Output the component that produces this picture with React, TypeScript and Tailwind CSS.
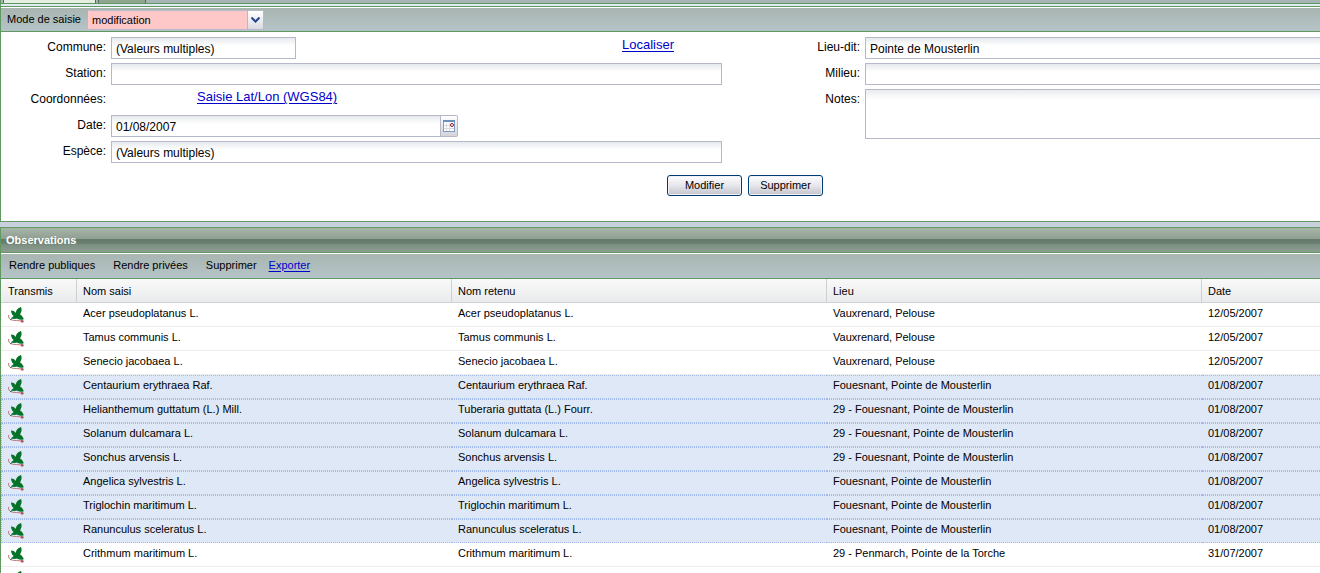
import { useState } from 'react';
import type { ReactNode } from 'react';

type Observation = { id: number; saisi: string; retenu: string; lieu: string; date: string };

const observations: Observation[] = [
  { id: 1, saisi: 'Acer pseudoplatanus L.', retenu: 'Acer pseudoplatanus L.', lieu: 'Vauxrenard, Pelouse', date: '12/05/2007' },
  { id: 2, saisi: 'Tamus communis L.', retenu: 'Tamus communis L.', lieu: 'Vauxrenard, Pelouse', date: '12/05/2007' },
  { id: 3, saisi: 'Senecio jacobaea L.', retenu: 'Senecio jacobaea L.', lieu: 'Vauxrenard, Pelouse', date: '12/05/2007' },
  { id: 4, saisi: 'Centaurium erythraea Raf.', retenu: 'Centaurium erythraea Raf.', lieu: 'Fouesnant, Pointe de Mousterlin', date: '01/08/2007' },
  { id: 5, saisi: 'Helianthemum guttatum (L.) Mill.', retenu: 'Tuberaria guttata (L.) Fourr.', lieu: '29 - Fouesnant, Pointe de Mousterlin', date: '01/08/2007' },
  { id: 6, saisi: 'Solanum dulcamara L.', retenu: 'Solanum dulcamara L.', lieu: '29 - Fouesnant, Pointe de Mousterlin', date: '01/08/2007' },
  { id: 7, saisi: 'Sonchus arvensis L.', retenu: 'Sonchus arvensis L.', lieu: '29 - Fouesnant, Pointe de Mousterlin', date: '01/08/2007' },
  { id: 8, saisi: 'Angelica sylvestris L.', retenu: 'Angelica sylvestris L.', lieu: 'Fouesnant, Pointe de Mousterlin', date: '01/08/2007' },
  { id: 9, saisi: 'Triglochin maritimum L.', retenu: 'Triglochin maritimum L.', lieu: 'Fouesnant, Pointe de Mousterlin', date: '01/08/2007' },
  { id: 10, saisi: 'Ranunculus sceleratus L.', retenu: 'Ranunculus sceleratus L.', lieu: 'Fouesnant, Pointe de Mousterlin', date: '01/08/2007' },
  { id: 11, saisi: 'Crithmum maritimum L.', retenu: 'Crithmum maritimum L.', lieu: '29 - Penmarch, Pointe de la Torche', date: '31/07/2007' },
  { id: 12, saisi: '', retenu: '', lieu: '', date: '' },
];

const inputClass =
  'block h-[22px] w-full border border-[#b5b8c8] bg-white bg-linear-to-b from-[#e6eaed] to-white to-40% px-1 pt-0.5 text-xs text-black focus:outline-none';
const toolbarClass = 'flex items-center border-t border-b border-t-white border-b-[#5f9960] bg-linear-to-b from-[#a8b5b0] to-[#b5c4c8]';
const linkClass = 'text-[13px] leading-[15px] text-[#0000cc] underline underline-offset-2';

function LeafIcon() {
  return (
    <svg className="block" width="16" height="16" viewBox="0 0 16 16" role="img" aria-label="Transmis">
      <path d="M0.5 8C0.2 10.6 1.4 12.4 4 13C7 13.8 10 13.4 14 14" fill="none" stroke="#b9686c" strokeWidth="0.9" />
      <circle cx="14.2" cy="14.3" r="1.4" fill="#b0555b" />
      <path d="M2.2 12.8L7.5 9" stroke="#156b2a" />
      <path d="M3 3.4C5 3.2 7 4.4 7.8 6C8 3.4 9.6 0.8 13 0C14.2 2.6 13.6 5.2 12 7.2C13.8 8.4 15.2 10 15.8 12.2C13.2 13.2 10.4 12.8 8.8 11.6C7.2 12.2 5 12 3.2 11C4.4 10.4 5.2 9.6 5.6 9C4 7.6 3 5.4 3 3.4Z" fill="#04732a" />
    </svg>
  );
}

function CalendarIcon() {
  return (
    <svg className="block" width="12" height="12" viewBox="0 0 12 12" aria-hidden="true">
      <rect x="0.5" y="0.5" width="11" height="11" fill="#fff" stroke="#7f9cc4" />
      <path d="M0 1H12" stroke="#6b8dbd" strokeWidth="2" />
      <path d="M1 5.5H11M1 8.5H11M3.5 3V11M6.5 3V11" stroke="#d9dde3" />
      <circle cx="9" cy="5" r="1.5" fill="#fff" stroke="#8c1a2b" />
    </svg>
  );
}

function Field({ id, label, children }: { id: string; label: string; children: ReactNode }) {
  return (
    <div className="flex items-start">
      <label htmlFor={id} className="w-[105px] shrink-0 pt-[3px] text-right text-xs leading-[14px]">{label}</label>
      <div className="ml-[5px] min-h-[22px] min-w-0 flex-1">{children}</div>
    </div>
  );
}

function FormButton({ children }: { children: string }) {
  return (
    <button type="button"
      className="h-[21px] w-[75px] rounded-[3px] border border-[#003c74] bg-linear-to-b from-white via-[#e6e6ec] to-[#c3c3cb] text-[11px] leading-none text-black shadow-[inset_0_0_0_1px_#f2f2f6]">
      {children}
    </button>
  );
}

function ObservationRow({ row, selected, onToggle }: { row: Observation; selected: boolean; onToggle: () => void }) {
  const cell = selected
    ? 'h-6 border-y border-dotted border-[#a3bae9] bg-[#dfe8f6] p-0 pl-1.5 pt-[3px] align-top leading-[13px]'
    : 'h-6 border-t border-b border-t-white border-b-[#ededed] bg-white p-0 pl-1.5 pt-[3px] align-top leading-[13px]';
  return (
    <tr onClick={onToggle}>
      <td className={selected ? `${cell} border-l` : `${cell} border-l border-l-white`}><LeafIcon /></td>
      <td className={cell}>{row.saisi}</td>
      <td className={cell}>{row.retenu}</td>
      <td className={cell}>{row.lieu}</td>
      <td className={cell}>{row.date}</td>
    </tr>
  );
}

export default function App() {
  const [mode, setMode] = useState('modification');
  const [selected, setSelected] = useState<number[]>([4, 5, 6, 7, 8, 9, 10]);

  const toggle = (id: number) => {
    setSelected((prev) => (prev.includes(id) ? prev.filter((s) => s !== id) : [...prev, id]));
  };

  return (
    <div className="h-screen overflow-hidden bg-[#c9d0de] font-['Liberation_Sans',Arial,sans-serif] text-[11px] text-black">
      <div className="flex h-1 border-b border-l border-[#5f9960] bg-[#a7b4b5] pl-0.5">
        <div className="w-[93px] border-r border-l border-[#4d6b4f] bg-[#e3eee0]" />
        <div className="ml-0.5 w-12 border-r border-l border-[#4d6b4f] bg-[#8fa58d]" />
      </div>
      <div className="h-[2px] border-l border-[#5f9960] bg-[#dfeaf2]" />

      <section className="border-t border-b border-l border-[#5f9960] bg-white">
        <div className={`${toolbarClass} h-[25px] pl-1.5`}>
          <label htmlFor="mode" className="w-[81px]">Mode de saisie</label>
          <div className="relative flex h-5 w-44 items-center">
            <select id="mode" value={mode} onChange={(e) => setMode(e.target.value)}
              className="h-5 w-full appearance-none border border-[#b5b8c8] border-l-[#ffc8c8] bg-[#ffc8c8] pt-px pl-[3px] text-[11px] focus:outline-none">
              <option value="modification">modification</option>
              <option value="ajout">ajout</option>
            </select>
            <span className="pointer-events-none absolute right-0 flex h-5 w-[17px] items-center justify-center border border-[#b5b8c8] bg-linear-to-b from-white to-[#d9dbe2]">
              <svg width="9" height="6" viewBox="0 0 9 6" aria-hidden="true">
                <path d="M0.5 0.5L4.5 4.5L8.5 0.5" fill="none" stroke="#24458c" strokeWidth="2" />
              </svg>
            </span>
          </div>
        </div>

        <form className="pt-[5px] pb-[25px]">
          <div className="flex items-start">
            <div className="flex w-[721px] shrink-0 flex-col gap-1">
              <Field id="commune" label="Commune:">
                <div className="flex justify-between">
                  <div className="w-[185px]">
                    <input id="commune" className={inputClass} defaultValue="(Valeurs multiples)" />
                  </div>
                  <a href="#localiser" className={`${linkClass} mr-12`}>Localiser</a>
                </div>
              </Field>
              <Field id="station" label="Station:">
                <input id="station" className={inputClass} />
              </Field>
              <Field id="coordonnees" label="Coordonnées:">
                <a id="coordonnees" href="#coordonnees" className={`${linkClass} ml-[86px] block w-fit`}>Saisie Lat/Lon (WGS84)</a>
              </Field>
              <Field id="date" label="Date:">
                <div className="flex w-[347px]">
                  <input id="date" className={inputClass} defaultValue="01/08/2007" />
                  <button type="button" aria-label="Choisir une date"
                    className="flex h-[22px] w-[17px] shrink-0 items-center justify-center rounded-r-xs border border-l-0 border-[#b5b8c8] bg-linear-to-b from-white to-[#d3d3d8]">
                    <CalendarIcon />
                  </button>
                </div>
              </Field>
              <Field id="espece" label="Espèce:">
                <input id="espece" className={inputClass} defaultValue="(Valeurs multiples)" />
              </Field>
            </div>
            <div className="ml-[33px] flex min-w-0 flex-1 flex-col gap-1">
              <Field id="lieudit" label="Lieu-dit:">
                <input id="lieudit" className={`${inputClass} border-r-0`} defaultValue="Pointe de Mousterlin" />
              </Field>
              <Field id="milieu" label="Milieu:">
                <input id="milieu" className={`${inputClass} border-r-0`} />
              </Field>
              <Field id="notes" label="Notes:">
                <textarea id="notes" className="block h-[50px] w-full resize-none border border-r-0 border-[#b5b8c8] bg-linear-to-b from-[#e9ecef] to-white to-20% px-1 text-xs focus:outline-none" />
              </Field>
            </div>
          </div>
          <div className="mt-3 flex justify-center gap-1.5 pl-[169px]">
            <FormButton>Modifier</FormButton>
            <FormButton>Supprimer</FormButton>
          </div>
        </form>
      </section>

      <section className="mt-[5px] border-t border-l border-[#5f9960] bg-white">
        <h2 className="h-[25px] border-b border-[#5f9960] bg-[linear-gradient(#a8b5a9_0%,#8f9f92_44%,#64786a_45%,#6c8072_64%,#7d9082_70%,#8d9d92_100%)] pl-[5px] text-[11px] leading-6 font-bold text-white">
          Observations
        </h2>
        <div className={`${toolbarClass} h-[26px] pb-0.5 pl-2`}>
          <button type="button">Rendre publiques</button>
          <button type="button" className="ml-[18px]">Rendre privées</button>
          <button type="button" className="ml-[18px]">Supprimer</button>
          <a href="#exporter" className="ml-3 text-[#0000cc] underline underline-offset-2">Exporter</a>
        </div>
        <table className="w-full table-fixed border-separate border-spacing-0 text-left">
          <colgroup>
            <col className="w-[76px]" />
            <col className="w-[375px]" />
            <col className="w-[375px]" />
            <col className="w-[375px]" />
            <col />
          </colgroup>
          <thead>
            <tr className="h-6 bg-linear-to-b from-[#f9f9f9] to-[#e9eaec]">
              {['Transmis', 'Nom saisi', 'Nom retenu', 'Lieu', 'Date'].map((h) => (
                <th key={h} className="border-r border-b border-[#d0d0d0] p-0 pt-0.5 pl-1.5 font-normal first:pl-[7px] last:border-r-0">{h}</th>
              ))}
            </tr>
          </thead>
          <tbody>
            {observations.map((row) => (
              <ObservationRow key={row.id} row={row} selected={selected.includes(row.id)} onToggle={() => toggle(row.id)} />
            ))}
          </tbody>
        </table>
      </section>
    </div>
  );
}
